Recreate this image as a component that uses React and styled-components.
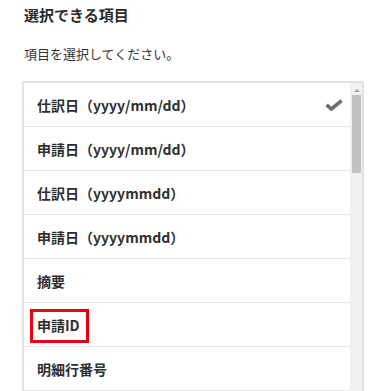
import styled, { createGlobalStyle } from "styled-components";

const GlobalStyle = createGlobalStyle`
  body {
    margin: 0;
    background: #fff;
    font-family: "Noto Sans CJK JP", "Noto Sans", sans-serif;
    color: #333;
  }
`;

const items = [
  { label: "仕訳日（yyyy/mm/dd）", checked: true },
  { label: "申請日（yyyy/mm/dd）" },
  { label: "仕訳日（yyyymmdd）" },
  { label: "申請日（yyyymmdd）" },
  { label: "摘要" },
  { label: "申請ID", marked: true },
  { label: "明細行番号" },
];

function Check() {
  return (
    <CheckIcon viewBox="0 0 18 12">
      <path d="M1.6 5.8 L6.4 10 L16.6 1.6" fill="none" stroke="#6e6e6e" strokeWidth="3.6" strokeLinejoin="miter" />
    </CheckIcon>
  );
}

export default function App() {
  return (
    <>
      <GlobalStyle />
      <Page>
        <Title>選択できる項目</Title>
        <Hint>項目を選択してください。</Hint>
        <ListBox>
          <List>
            {items.map((item) => (
              <Row key={item.label}>
                {item.marked ? <Marked>{item.label}</Marked> : <span>{item.label}</span>}
                {item.checked && <Check />}
              </Row>
            ))}
          </List>
          <Scrollbar>
            <Arrow />
            <Thumb />
          </Scrollbar>
        </ListBox>
      </Page>
    </>
  );
}

const Page = styled.div`
  padding: 5px 22px 0 22px;
  height: 391px;
  box-sizing: border-box;
  overflow: hidden;
`;

const Title = styled.h2`
  margin: 0 0 0 2px;
  font-size: 15px;
  font-weight: 700;
  line-height: 20px;
  color: #2b2b2b;
`;

const Hint = styled.p`
  margin: 19px 0 0 2px;
  font-size: 13px;
  line-height: 20px;
  color: #333;
`;

const ListBox = styled.div`
  margin-top: 17px;
  width: 342px;
  height: 330px;
  box-sizing: border-box;
  border: 2px solid #e2e2e2;
  border-bottom: none;
  display: flex;
  overflow: hidden;
`;

const List = styled.div`
  flex: 1;
  display: flex;
  flex-direction: column;
`;

const Row = styled.div`
  height: 43px;
  flex-shrink: 0;
  border-bottom: 1px solid #e6e6e6;
  display: flex;
  align-items: center;
  justify-content: space-between;
  padding: 0 7px 0 13px;
  font-size: 14px;
  font-weight: 700;
  color: #2f2f2f;
`;

const Marked = styled.span`
  position: relative;

  &::after {
    content: "";
    position: absolute;
    left: -7px;
    right: -9px;
    top: -6px;
    bottom: -8px;
    border: 3px solid #e60012;
  }
`;

const CheckIcon = styled.svg`
  width: 18px;
  height: 12px;
`;

const Scrollbar = styled.div`
  width: 11px;
  background: #f1f1f1;
  display: flex;
  flex-direction: column;
  align-items: center;
  border-left: 1px solid #ececec;
`;

const Arrow = styled.div`
  margin-top: 6px;
  width: 0;
  height: 0;
  border-left: 3px solid transparent;
  border-right: 3px solid transparent;
  border-bottom: 3px solid #a3a3a3;
`;

const Thumb = styled.div`
  margin-top: 3px;
  width: 9px;
  height: 78px;
  background: #c1c1c1;
`;
